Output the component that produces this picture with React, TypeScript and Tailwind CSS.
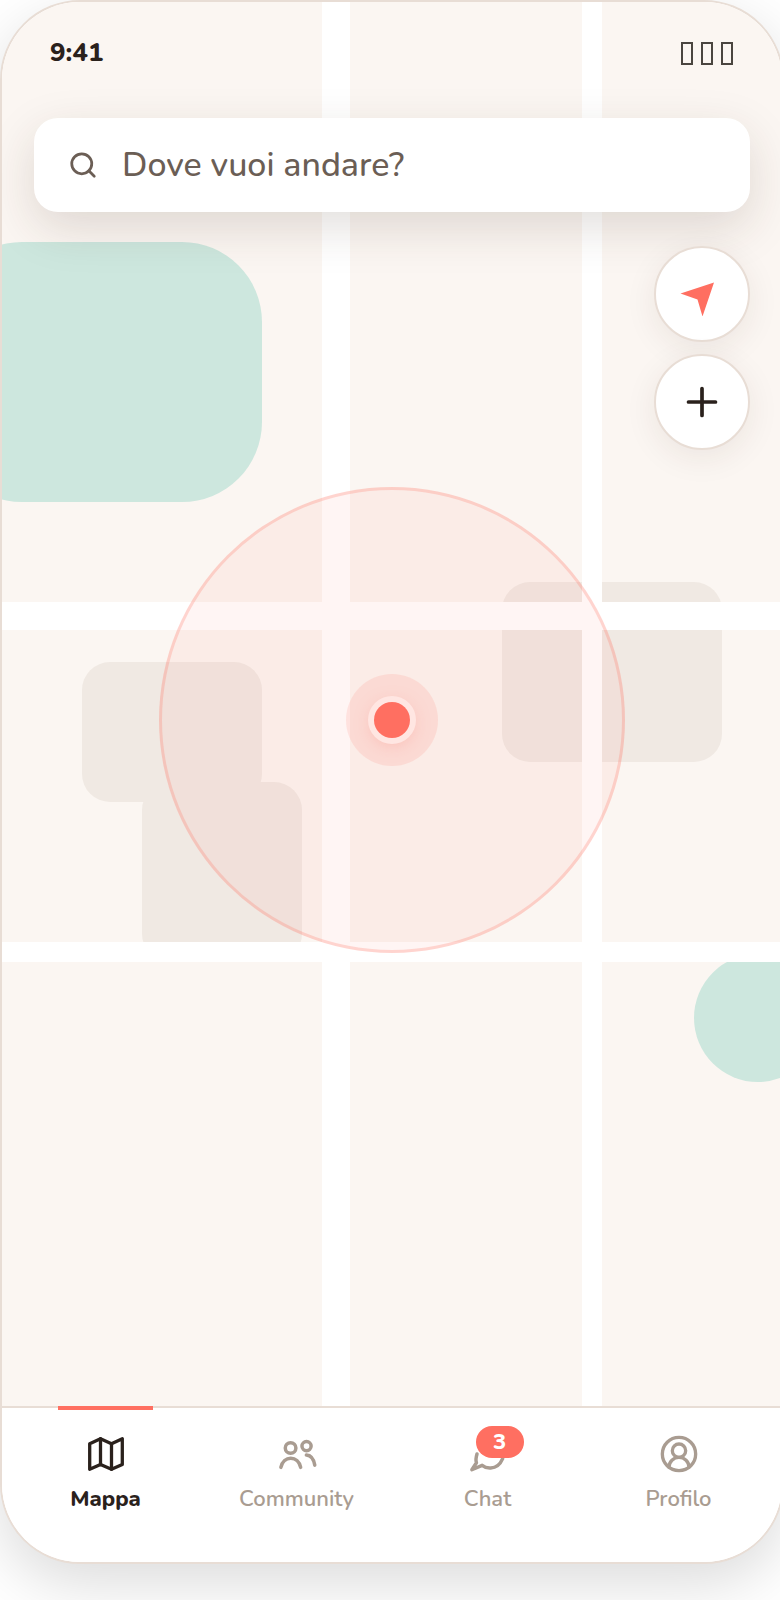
import React from "react";
import { Search } from "lucide-react";

const font = "font-['Nunito','Lato','Noto_Sans',sans-serif]";

function MapGlyph() {
  return (
    <svg width="44" height="44" viewBox="0 0 44 44" fill="none" stroke="#2a211c" strokeWidth="3.3" strokeLinejoin="round" strokeLinecap="round">
      <path d="M5.7 11.7 16.5 6.7 27.5 11.7 38.3 6.7V32.5L27.5 37.3 16.5 32.5 5.7 37.3Z" />
      <path d="M16.5 6.7V32.5M27.5 11.7V37.3" />
    </svg>
  );
}

function UsersGlyph() {
  return (
    <svg width="44" height="44" viewBox="0 0 24 24" fill="none" stroke="#a99c91" strokeWidth="1.9" strokeLinecap="round" strokeLinejoin="round">
      <circle cx="8.5" cy="8.7" r="2.9" />
      <circle cx="17.2" cy="7.7" r="2.5" />
      <path d="M3.2 19.3c.7-3.2 2.9-5 5.4-5s4.7 1.8 5.4 5" />
      <path d="M17.1 12.6c2.2.1 4 2.2 4.6 5.5" />
    </svg>
  );
}

function ChatGlyph() {
  return (
    <svg width="44" height="44" viewBox="0 0 24 24" fill="none" stroke="#a99c91" strokeWidth="1.9" strokeLinecap="round" strokeLinejoin="round">
      <path d="M6 12C5.4 14 5.2 15.5 5.7 16.8L3.2 20.6 8.8 18.2C10 19.2 12 19.7 13.5 19.6 16 19.5 18.5 18 20 14.5" />
    </svg>
  );
}

function ProfileGlyph() {
  return (
    <svg width="40" height="40" viewBox="0 0 24 24" fill="none" stroke="#a99c91" strokeWidth="2" strokeLinecap="round" strokeLinejoin="round">
      <path d="M18 20a6 6 0 0 0-12 0" />
      <circle cx="12" cy="10" r="4" />
      <circle cx="12" cy="12" r="10" />
    </svg>
  );
}

function Tab({ label, active, children }: { label: string; active?: boolean; children: React.ReactNode }) {
  return (
    <div className="relative flex flex-col items-center">
      {active && <div className="absolute left-[48px] top-[-2px] h-1 w-[95px] bg-[#ff6f61]" />}
      <div className="mt-6 flex h-11 w-11 items-center justify-center">{children}</div>
      <span className={`mt-[8px] text-[22px] leading-[30px] ${active ? "font-extrabold text-[#2a211c]" : "font-semibold text-[#a99c91]"}`}>{label}</span>
    </div>
  );
}

export default function App() {
  return (
    <div className={`h-[1600px] w-[780px] overflow-hidden bg-white ${font}`}>
      <div className="flex h-[1564px] w-[784px] flex-col overflow-hidden rounded-[80px] border-2 border-[#e8ddd5] bg-white shadow-[0_20px_60px_rgba(0,0,0,0.14)]">
        <div className="relative flex-1 overflow-hidden bg-[#fbf6f2]">
          <div className="absolute left-[-60px] top-[240px] h-[260px] w-[320px] rounded-[80px] bg-[#cde7de]" />
          <div className="absolute right-[-40px] top-[952px] h-32 w-32 rounded-full bg-[#cde7de]" />
          <div className="absolute left-[80px] top-[660px] h-[140px] w-[180px] rounded-[28px] bg-[#f0e9e3]" />
          <div className="absolute left-[140px] top-[780px] h-[180px] w-[160px] rounded-[28px] bg-[#f0e9e3]" />
          <div className="absolute left-[500px] top-[580px] h-[180px] w-[220px] rounded-[28px] bg-[#f0e9e3]" />

          <div className="absolute inset-y-0 left-[320px] w-7 bg-white" />
          <div className="absolute inset-y-0 left-[580px] w-5 bg-white" />
          <div className="absolute inset-x-0 top-[600px] h-7 bg-white" />
          <div className="absolute inset-x-0 top-[940px] h-5 bg-white" />

          <div className="absolute left-[157px] top-[485px] h-[466px] w-[466px] rounded-full border-[3px] border-[rgba(255,111,97,0.25)] bg-[rgba(255,111,97,0.07)]" />
          <div className="absolute left-[344px] top-[672px] flex h-[92px] w-[92px] items-center justify-center rounded-full bg-[rgba(255,111,97,0.14)]">
            <div className="h-9 w-9 rounded-full bg-[#ff6f61] shadow-[0_0_0_6px_#ffe6e2,0_4px_20px_rgba(255,111,97,0.4)]" />
          </div>

          <div className="absolute inset-x-0 top-[38px] flex items-center justify-between pl-[48px] pr-[49px]">
            <span className="text-[26px] font-extrabold leading-[26px] text-[#2a211c]">9:41</span>
            <div className="flex gap-2">
              <span className="h-[23px] w-3 border-2 border-[#4a4540]" />
              <span className="h-[23px] w-3 border-2 border-[#4a4540]" />
              <span className="h-[23px] w-3 border-2 border-[#4a4540]" />
            </div>
          </div>

          <div className="absolute left-[32px] top-[116px] flex h-[94px] w-[716px] items-center gap-[24px] rounded-[24px] bg-white pl-[34px] shadow-[0_16px_48px_rgba(60,40,30,0.15)]">
            <Search size={30} strokeWidth={2.2} color="#6b5e55" />
            <span className="text-[34px] font-medium leading-none text-[#6b5e55]">Dove vuoi andare?</span>
          </div>

          <div className="absolute left-[652px] top-[244px] flex flex-col gap-3">
            <div className="flex h-24 w-24 items-center justify-center rounded-full border-2 border-[#e8ddd5] bg-white shadow-[0_8px_32px_rgba(60,40,30,0.08)]">
              <svg width="44" height="44" viewBox="0 0 44 44" fill="#ff6f61">
                <path d="M0.5 21.5 34 10.5 22.5 44.5 17.5 27.5Z" />
              </svg>
            </div>
            <div className="flex h-24 w-24 items-center justify-center rounded-full border-2 border-[#e8ddd5] bg-white shadow-[0_8px_32px_rgba(60,40,30,0.08)]">
              <svg width="44" height="44" viewBox="0 0 44 44" fill="none" stroke="#2a211c" strokeWidth="3.7" strokeLinecap="round">
                <path d="M8.5 22h27M22 8.5v27" />
              </svg>
            </div>
          </div>
        </div>

        <div className="grid h-[156px] grid-cols-4 border-t-2 border-[#e8ddd5] bg-white px-2">
          <Tab label="Mappa" active><MapGlyph /></Tab>
          <Tab label="Community"><UsersGlyph /></Tab>
          <Tab label="Chat">
            <div className="relative">
              <ChatGlyph />
              <span className="absolute left-[10px] top-[-6px] flex h-8 w-12 items-center justify-center rounded-full bg-[#ff6f61] text-[22px] font-extrabold leading-none text-white">3</span>
            </div>
          </Tab>
          <Tab label="Profilo"><ProfileGlyph /></Tab>
        </div>
      </div>
    </div>
  );
}
